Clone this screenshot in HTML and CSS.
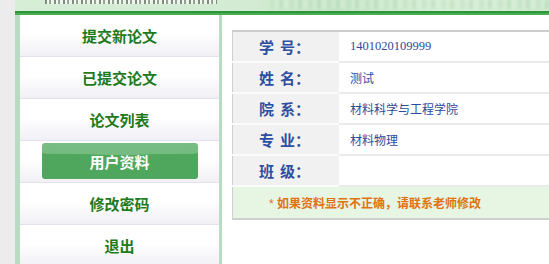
FILE: index.html
```html
<!DOCTYPE html>
<html lang="zh">
<head>
<meta charset="utf-8">
<title>用户资料</title>
<link rel="stylesheet" href="styles.css">
</head>
<body>
<div class="gutter"></div>
<div class="page">
  <header class="banner">
    <div class="banner-title"></div>
    <div class="banner-mark"></div>
  </header>
  <div class="rule"></div>
  <div class="main">
    <nav class="sidebar">
      <ul class="menu">
        <li class="item"><a>提交新论文</a></li>
        <li class="item"><a>已提交论文</a></li>
        <li class="item"><a>论文列表</a></li>
        <li class="item active"><a>用户资料</a></li>
        <li class="item"><a>修改密码</a></li>
        <li class="item"><a>退出</a></li>
      </ul>
    </nav>
    <section class="content">
      <table class="info">
        <tr><th>学 号：</th><td class="num">1401020109999</td></tr>
        <tr><th>姓 名：</th><td>测试</td></tr>
        <tr><th>院 系：</th><td>材料科学与工程学院</td></tr>
        <tr><th>专 业：</th><td>材料物理</td></tr>
        <tr><th>班 级：</th><td></td></tr>
        <tr class="notice"><td colspan="2"><span class="star">*</span> 如果资料显示不正确，请联系老师修改</td></tr>
      </table>
    </section>
  </div>
</div>
</body>
</html>
```

FILE: styles.css
```css
html, body {
  margin: 0;
  padding: 0;
  height: 100%;
  overflow: hidden;
}
body {
  display: flex;
  background: #ffffff;
  font-family: "Liberation Sans", "Noto Sans CJK SC", sans-serif;
}
.gutter {
  width: 15px;
  flex: 0 0 15px;
  background: #ececec;
}
.page {
  flex: 1;
  display: flex;
  flex-direction: column;
  min-width: 0;
}
.banner {
  height: 11px;
  overflow: hidden;
  position: relative;
  background: linear-gradient(90deg, #d6eed6 0%, #d2ebd2 45%, #c4e4c6 60%, #d8efd8 80%, #cfe9d0 100%);
}
.banner-title {
  position: absolute;
  left: 30px;
  top: 0;
  width: 172px;
  height: 4px;
  background: repeating-linear-gradient(90deg, #5a625c 0 2px, #ffffff 2px 4px, #7a807c 4px 6px, #f4f8f4 6px 9px);
  opacity: 0.7;
}
.banner-mark {
  position: absolute;
  left: 255px;
  top: 0;
  width: 280px;
  height: 9px;
  background: repeating-linear-gradient(90deg, #bfe0c2 0 5px, #d6eed6 5px 9px, #b2d9b6 9px 13px, #d8efd8 13px 19px);
  opacity: 0.5;
  filter: blur(1px);
}
.rule {
  height: 4px;
  background: linear-gradient(180deg, #2e963a 0%, #2e963a 50%, #4aac52 50%, #4aac52 100%);
}
.main {
  flex: 1;
  display: flex;
  min-height: 0;
}
.sidebar {
  width: 199px;
  flex: 0 0 199px;
  border-left: 5px solid #b8dcc1;
  border-right: 3px solid #b8dcc1;
  background: #ffffff;
}
.menu {
  list-style: none;
  margin: 0;
  padding: 0;
}
.item {
  height: 41px;
  border-bottom: 1px solid #e2e2ee;
  background: linear-gradient(180deg, #ffffff 0%, #ffffff 45%, #f0f0f6 100%);
  display: flex;
  align-items: center;
  justify-content: center;
}
.item a {
  font-size: 15px;
  font-weight: bold;
  color: #1d7a1d;
}
.item.active {
  align-items: flex-start;
}
.item.active a {
  margin-top: 2px;
  width: 156px;
  height: 36px;
  border-radius: 3px;
  display: flex;
  align-items: center;
  justify-content: center;
  color: #ffffff;
  background:
    radial-gradient(ellipse 180% 60% at 50% -10%, #7cbf86 0%, #74bb80 70%, rgba(116,187,128,0) 71%),
    #4fa75d;
}
.content {
  flex: 1;
  padding: 15px 0 0 10px;
  min-width: 0;
}
.info {
  width: 340px;
  border-collapse: collapse;
  border-top: 2px solid #cfcfcf;
  border-left: 1px solid #cfcfcf;
  border-bottom: 2px solid #cfcfcf;
}
.info tr {
  height: 31px;
}
.info th,
.info td {
  padding: 0;
  border-bottom: 2px solid #ebebeb;
  vertical-align: middle;
}
.info th {
  width: 103px;
  background: #f1f1f1;
  color: #2e4ea0;
  font-size: 15px;
  font-weight: bold;
  text-align: center;
  border-bottom-color: #fbfbfb;
  padding-right: 3px;
  word-spacing: 2px;
}
.info td {
  padding-left: 11px;
  color: #2e4a9c;
  font-size: 12px;
  background: #ffffff;
}
.info td.num {
  font-family: "Liberation Serif", serif;
  font-size: 12.5px;
  color: #33489a;
}
.info tr.notice td {
  height: 31px;
  border-bottom: 0;
  background: #e7f5e3;
  padding-left: 36px;
  color: #e07210;
  font-weight: bold;
  font-size: 12px;
}
.star {
  color: #e8683a;
  font-weight: normal;
}
```
